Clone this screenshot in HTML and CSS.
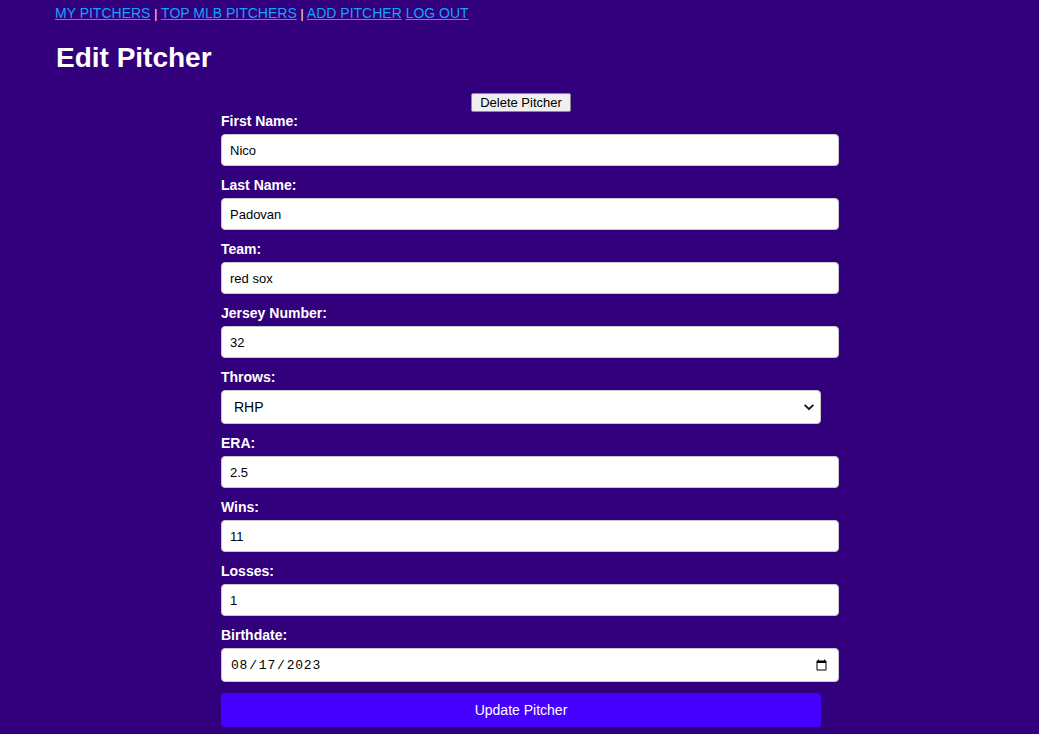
FILE: index.html
```html
<!DOCTYPE html>
<html lang="en">
<head>
<meta charset="utf-8">
<title>Edit Pitcher</title>
<link rel="stylesheet" href="styles.css">
</head>
<body>
<nav class="nav">
  <a href="#">MY PITCHERS</a> <span class="sep">|</span> <a href="#">TOP MLB PITCHERS</a> <span class="sep">|</span> <a href="#">ADD PITCHER</a> <a href="#">LOG OUT</a>
</nav>
<h1 class="title">Edit Pitcher</h1>
<div class="wrap">
  <div class="delete-row"><button class="delete-btn" type="button">Delete Pitcher</button></div>
  <form class="form">
    <label class="lbl" for="fn">First Name:</label>
    <input class="field" id="fn" type="text" value="Nico">
    <label class="lbl" for="ln">Last Name:</label>
    <input class="field" id="ln" type="text" value="Padovan">
    <label class="lbl" for="tm">Team:</label>
    <input class="field" id="tm" type="text" value="red sox">
    <label class="lbl" for="jn">Jersey Number:</label>
    <input class="field" id="jn" type="text" value="32">
    <label class="lbl" for="th">Throws:</label>
    <div class="select-wrap">
      <select class="select" id="th">
        <option>RHP</option>
        <option>LHP</option>
      </select>
      <svg class="chev" width="10" height="7" viewBox="0 0 10 7"><path d="M1.2 1.4 L5 5.2 L8.8 1.4" fill="none" stroke="#111" stroke-width="1.9" stroke-linecap="round" stroke-linejoin="round"/></svg>
    </div>
    <label class="lbl" for="era">ERA:</label>
    <input class="field" id="era" type="text" value="2.5">
    <label class="lbl" for="w">Wins:</label>
    <input class="field" id="w" type="text" value="11">
    <label class="lbl" for="l">Losses:</label>
    <input class="field" id="l" type="text" value="1">
    <label class="lbl" for="bd">Birthdate:</label>
    <input class="field date" id="bd" type="date" value="2023-08-17">
    <button class="update-btn" type="button">Update Pitcher</button>
  </form>
</div>
</body>
</html>
```
FILE: styles.css
```css
html, body {
  margin: 0;
  padding: 0;
}
body {
  background: #32007c;
  color: #ffffff;
  font-family: "Liberation Sans", Arial, Helvetica, sans-serif;
  min-height: 734px;
}
.nav {
  padding: 5px 0 0 55px;
  font-size: 14px;
  line-height: 16px;
  color: #ffffff;
}
.nav a {
  color: #14a3ff;
  text-decoration: underline;
}
.sep {
  font-size: 12px;
}
.title {
  margin: 20px 0 0 56px;
  font-size: 28px;
  line-height: 32px;
  font-weight: bold;
}
.wrap {
  width: 600px;
  margin: 19px 0 0 221px;
}
.delete-row {
  display: flex;
  justify-content: center;
}
.delete-btn {
  font-family: "Liberation Sans", Arial, sans-serif;
  font-size: 13px;
  height: 19px;
  width: 100px;
  padding: 0;
  background: #efefef;
  color: #000;
  border: 1px solid #8a8a8a;
  border-radius: 2px;
}
.form {
  display: flex;
  flex-direction: column;
  align-items: flex-start;
}
.lbl {
  display: block;
  font-size: 14px;
  line-height: 17px;
  font-weight: bold;
  margin-top: 1px;
  margin-bottom: 4px;
}
.field {
  box-sizing: content-box;
  width: 600px;
  height: 14px;
  padding: 8px;
  margin: 0 0 10px 0;
  border: 1px solid #c8c8c8;
  border-radius: 4px;
  background: #fff;
  color: #000;
  font-family: "Liberation Sans", Arial, sans-serif;
  font-size: 13px;
  outline: none;
}
.date {
  height: 16px;
  font-family: "Liberation Mono", monospace;
  font-size: 13px;
  letter-spacing: 0.8px;
  margin-bottom: 11px;
}
.select-wrap {
  position: relative;
  width: 600px;
  margin-bottom: 10px;
}
.select {
  -webkit-appearance: none;
  appearance: none;
  display: block;
  box-sizing: border-box;
  width: 600px;
  height: 34px;
  padding: 0 12px;
  border: 1px solid #c8c8c8;
  border-radius: 4px;
  background: #fff;
  color: #000;
  font-family: "Liberation Sans", Arial, sans-serif;
  font-size: 14px;
}
.chev {
  position: absolute;
  right: 7px;
  top: 14px;
  pointer-events: none;
}
.update-btn {
  width: 600px;
  height: 34px;
  border: none;
  border-radius: 4px;
  background: #4500ff;
  color: #fff;
  font-family: "Liberation Sans", Arial, sans-serif;
  font-size: 14px;
}
```
